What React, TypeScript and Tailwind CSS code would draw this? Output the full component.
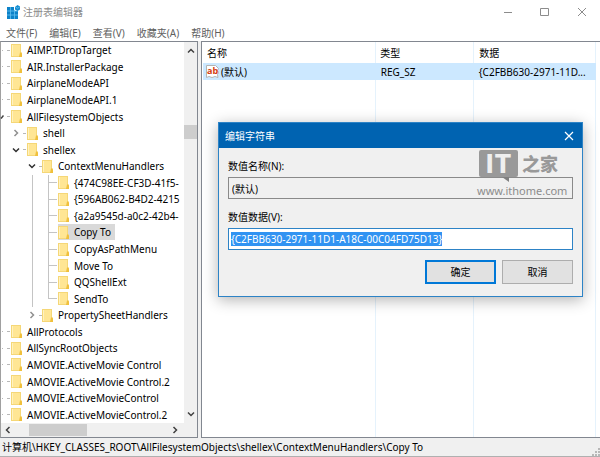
import { useEffect, useRef } from "react";
import clsx from "clsx";

type Guide = "stub" | "clip" | "closed" | "open" | "line" | "tee" | "end" | "none";

type TreeItem = {
  name: string;
  guides: Guide[];
  selected?: boolean;
};

const tree: TreeItem[] = [
  { name: "AIMP.TDropTarget", guides: ["stub"] },
  { name: "AIR.InstallerPackage", guides: ["stub"] },
  { name: "AirplaneModeAPI", guides: ["stub"] },
  { name: "AirplaneModeAPI.1", guides: ["stub"] },
  { name: "AllFilesystemObjects", guides: ["clip"] },
  { name: "shell", guides: ["none", "closed"] },
  { name: "shellex", guides: ["none", "open"] },
  { name: "ContextMenuHandlers", guides: ["none", "none", "open"] },
  { name: "{474C98EE-CF3D-41f5-", guides: ["none", "none", "line", "tee"] },
  { name: "{596AB062-B4D2-4215", guides: ["none", "none", "line", "tee"] },
  { name: "{a2a9545d-a0c2-42b4-", guides: ["none", "none", "line", "tee"] },
  { name: "Copy To", guides: ["none", "none", "line", "tee"], selected: true },
  { name: "CopyAsPathMenu", guides: ["none", "none", "line", "tee"] },
  { name: "Move To", guides: ["none", "none", "line", "tee"] },
  { name: "QQShellExt", guides: ["none", "none", "line", "tee"] },
  { name: "SendTo", guides: ["none", "none", "line", "end"] },
  { name: "PropertySheetHandlers", guides: ["none", "none", "closed"] },
  { name: "AllProtocols", guides: ["stub"] },
  { name: "AllSyncRootObjects", guides: ["stub"] },
  { name: "AMOVIE.ActiveMovie Control", guides: ["stub"] },
  { name: "AMOVIE.ActiveMovie Control.2", guides: ["stub"] },
  { name: "AMOVIE.ActiveMovieControl", guides: ["stub"] },
  { name: "AMOVIE.ActiveMovieControl.2", guides: ["stub"] },
];

const menus = ["文件(F)", "编辑(E)", "查看(V)", "收藏夹(A)", "帮助(H)"];

const guideWidths = ["w-[11px]", "w-4", "w-[15px]", "w-4"];

const chevrons = {
  up: "M2 6.500 5 3.500l3 3",
  down: "M2 3.500 5 6.500l3-3",
  left: "M6.500 2 3.500 5l3 3",
  right: "M3.500 2 6.500 5l-3 3",
};

function Chevron({ to, className }: { to: keyof typeof chevrons; className?: string }) {
  return (
    <svg viewBox="0 0 10 10" className={clsx("size-[10px] shrink-0", className)} fill="none" stroke="currentColor" strokeWidth="1.5">
      <path d={chevrons[to]} />
    </svg>
  );
}

function GuideCell({ kind, width }: { kind: Guide; width: string }) {
  return (
    <span className={clsx("flex shrink-0 items-center self-stretch", width)}>
      {kind === "stub" && (
        <>
          <span className="ml-0.5 w-px border-t border-[#b8b8b8]" />
          <span className="ml-1 w-[3px] border-t border-[#b8b8b8]" />
        </>
      )}
      {kind === "clip" && (
        <>
          <svg viewBox="0 0 4 6" className="h-[6px] w-1" fill="none" stroke="#404040" strokeWidth="1.4">
            <path d="M1 4.500 3.500 1.500" />
          </svg>
          <span className="ml-[3px] w-[3px] border-t border-[#b8b8b8]" />
        </>
      )}
      {(kind === "closed" || kind === "open") && (
        <>
          <Chevron to={kind === "open" ? "down" : "right"} className={kind === "open" ? "text-[#303030]" : "text-[#909090]"} />
          <span className="ml-0.5 w-[3px] border-t border-[#b8b8b8]" />
        </>
      )}
      {kind === "line" && <span className="w-[6px] self-stretch border-r border-[#c4c4c4]" />}
      {(kind === "tee" || kind === "end") && (
        <>
          <span
            className={clsx(
              "w-[7px] border-r border-[#c4c4c4]",
              kind === "tee" ? "self-stretch" : "h-1/2 self-start"
            )}
          />
          <span className="w-2 border-t border-[#c4c4c4]" />
        </>
      )}
    </span>
  );
}

function Folder() {
  return (
    <svg viewBox="0 0 11 13" className="h-[13px] w-[11px] shrink-0">
      <path d="M0 0h10v8l1 1v4H0z" fill="#f5d777" />
      <path d="M1 1h8v11H1z" fill="#ffe694" />
      <path d="M1 1h1v11H1z" fill="#fff2c0" />
      <path d="M9 8.500h1l1 1V13H8z" fill="#f0c03c" />
    </svg>
  );
}

function RegeditIcon() {
  return (
    <svg viewBox="0 0 14 14" className="size-[14px] shrink-0">
      <path d="M1 2h7v4h4v8H1z" fill="#0c82c8" />
      <path d="M1 6h11M1 10h11M4.500 2v12M8.500 5v9" stroke="#62c0f0" strokeWidth=".8" />
      <path d="m9 2 2.500-2L14 1.500v3L11.500 6 9 4.500z" fill="#148cd0" />
      <path d="m9.500 2.200 2 1 2-1" fill="none" stroke="#7ccdf5" strokeWidth=".7" />
    </svg>
  );
}

function StringIcon() {
  return (
    <svg viewBox="0 0 13 13" className="size-[13px] shrink-0">
      <path d="M.5.5h9l3 3-1 2 1 2-1 2 .5 3-3-1-3 1-3-1-2.500 1z" fill="#fff" stroke="#b4b4b4" />
      <text x="1" y="9" fontSize="9" fontWeight="700" fontFamily="Open Sans, sans-serif" fill="#d43c10">
        ab
      </text>
    </svg>
  );
}

function TitleBar() {
  return (
    <header className="flex h-6 shrink-0 items-center pl-1.5 text-[#8c8c8c]">
      <RegeditIcon />
      <h1 className="ml-[3px] flex-1">注册表编辑器</h1>
      <div className="flex">
        <button aria-label="最小化" className="flex h-6 w-[37px] items-center justify-center">
          <svg viewBox="0 0 10 10" className="size-[10px]" stroke="currentColor">
            <path d="M1 5.500h8" />
          </svg>
        </button>
        <button aria-label="最大化" className="flex h-6 w-[37px] items-center justify-center">
          <svg viewBox="0 0 10 10" className="size-[10px]" fill="none" stroke="currentColor">
            <path d="M.5 1.500h8v7h-8z" />
          </svg>
        </button>
        <button aria-label="关闭" className="flex h-6 w-[37px] items-center justify-center">
          <svg viewBox="0 0 10 10" className="size-[10px]" stroke="currentColor">
            <path d="m1 1 8 8M9 1 1 9" />
          </svg>
        </button>
      </div>
    </header>
  );
}

function TreePane() {
  return (
    <section className="flex w-[198px] shrink-0 flex-col border border-[#828790] border-l-[#a0a0a0] bg-white">
      <div className="flex min-h-0 flex-1">
        <ul className="-ml-px flex min-w-0 flex-1 flex-col overflow-hidden">
          {tree.map((item) => (
            <li key={item.name} className="flex min-h-0 flex-1 items-center whitespace-nowrap">
              {item.guides.map((kind, i) => (
                <GuideCell key={i} kind={kind} width={guideWidths[i]} />
              ))}
              <span className={clsx("flex h-4 items-center", item.selected && "bg-[#d9d9d9]")}>
                <Folder />
                <span className="pl-[5px] pr-1">{item.name}</span>
              </span>
            </li>
          ))}
        </ul>
        <div className="flex w-[13px] shrink-0 flex-col items-center bg-[#f0f0f0] py-1 text-[#404040]">
          <Chevron to="up" />
          <span className="mt-[69px] h-[14px] w-full bg-[#cdcdcd]" />
          <Chevron to="down" className="mt-auto" />
        </div>
      </div>
      <div className="flex h-[14px] shrink-0 items-center bg-[#f0f0f0] pl-0.5 pr-[17px] text-[#404040]">
        <Chevron to="left" />
        <span className="ml-4 h-3 w-[58px] bg-[#cdcdcd]" />
        <Chevron to="right" className="ml-auto" />
      </div>
    </section>
  );
}

function ValueList() {
  return (
    <section className="min-w-0 flex-1 border border-r-0 border-[#828790] bg-white pl-px pr-1">
      <table className="h-full w-full table-fixed border-collapse text-left">
        <thead>
          <tr className="h-[21px]">
            <th className="w-[44%] border-r border-[#e5f2fc] pl-1 font-normal">名称</th>
            <th className="w-1/4 border-r border-[#e5f2fc] pl-1 font-normal">类型</th>
            <th className="border-r border-[#e5f2fc] pl-[5px] font-normal">数据</th>
          </tr>
        </thead>
        <tbody>
          <tr className="h-[17px] bg-[#cce8ff]">
            <td className="pl-[3px]">
              <span className="flex items-center gap-0.5">
                <StringIcon />
                (默认)
              </span>
            </td>
            <td className="pl-[5px]">REG_SZ</td>
            <td className="whitespace-nowrap pl-[5px]">{"{C2FBB630-2971-11D..."}</td>
          </tr>
          <tr>
            <td className="border-r border-[#e5f2fc]" />
            <td className="border-r border-[#e5f2fc]" />
            <td className="border-r border-[#e5f2fc]" />
          </tr>
        </tbody>
      </table>
    </section>
  );
}

function Watermark() {
  return (
    <div className="pointer-events-none absolute left-[258px] top-[27px] flex flex-col text-[#8c8c8c]">
      <div className="flex items-center gap-1 pl-0.5">
        <span className="relative flex h-[27px] w-[39px] items-center justify-center gap-px rounded-xs bg-[#999] font-[Roboto,sans-serif] text-[26px] font-black leading-none text-[#efefef]">
          <span>I</span>
          <span>T</span>
          <svg viewBox="0 0 7 5" className="absolute left-[23px] top-[27px] h-[5px] w-[7px]">
            <path d="M0 0h7v5z" fill="#808080" />
          </svg>
        </span>
        <span className="text-lg font-black leading-none text-[#999]">之家</span>
      </div>
      <span className="mt-1.5 text-[11px] leading-4">www.ithome.com</span>
    </div>
  );
}

function EditStringDialog() {
  const dataRef = useRef<HTMLInputElement>(null);

  // the value starts out fully selected, ready to be overwritten
  useEffect(() => {
    dataRef.current?.focus();
    dataRef.current?.select();
  }, []);

  return (
    <div
      role="dialog"
      aria-labelledby="dialog-title"
      className="absolute left-[218px] top-[122px] w-[365px] border border-[#2d83c6] bg-[#f0f0f0] shadow-[0_3px_14px_rgba(0,0,0,0.3)]"
    >
      <div className="flex h-[25px] items-center bg-[#0063b1] pl-1.5 text-white">
        <h2 id="dialog-title" className="flex-1">
          编辑字符串
        </h2>
        <button aria-label="关闭" className="flex h-full w-[26px] items-center justify-center">
          <svg viewBox="0 0 10 10" className="size-[10px]" stroke="currentColor" strokeWidth="1.2">
            <path d="m1 1 8 8M9 1 1 9" />
          </svg>
        </button>
      </div>
      <form className="flex flex-col px-[9px] pb-3 pt-[11px]" onSubmit={(e) => e.preventDefault()}>
        <label htmlFor="value-name" className="leading-[14px]">
          数值名称(N):
        </label>
        <input
          id="value-name"
          readOnly
          defaultValue="(默认)"
          className="mt-1 h-[22px] border border-[#8a8a8a] bg-[#f0f0f0] px-[3px] outline-none"
        />
        <label htmlFor="value-data" className="mt-[11px] leading-[14px]">
          数值数据(V):
        </label>
        <input
          id="value-data"
          ref={dataRef}
          defaultValue="{C2FBB630-2971-11D1-A18C-00C04FD75D13}"
          className="mt-1 h-[22px] border border-[#2d83c6] bg-white px-0.5 outline-none selection:bg-[#3093f2fe] selection:text-white"
        />
        <div className="mt-2.5 flex justify-end gap-1.5">
          <button className="h-6 w-[71px] border-2 border-[#0078d7] bg-[#e1e1e1]">确定</button>
          <button type="button" className="h-6 w-[71px] border border-[#adadad] bg-[#e1e1e1]">
            取消
          </button>
        </div>
      </form>
      <Watermark />
    </div>
  );
}

export default function App() {
  return (
    <div className="relative flex h-screen flex-col overflow-hidden bg-white font-['Noto_Sans','Noto_Sans_CJK_SC',sans-serif] text-[10px] leading-[14px] text-black">
      <TitleBar />
      <nav className="flex h-[17px] shrink-0 items-center gap-3 pl-1.5 text-[#606060]">
        {menus.map((menu) => (
          <button key={menu}>{menu}</button>
        ))}
      </nav>
      <main className="flex min-h-0 flex-1 gap-[3px] bg-[#f0f0f0]">
        <TreePane />
        <ValueList />
      </main>
      <footer className="flex h-[19px] shrink-0 items-center border-b border-[#b0b0b0] bg-[#f0f0f0] pl-0.5">
        <p className="flex-1">计算机\HKEY_CLASSES_ROOT\AllFilesystemObjects\shellex\ContextMenuHandlers\Copy To</p>
        <svg viewBox="0 0 8 8" className="size-2 self-end" fill="#b8b8b8">
          <path d="M6 0h2v2H6zM3 3h2v2H3zM6 3h2v2H6zM0 6h2v2H0zM3 6h2v2H3zM6 6h2v2H6z" />
        </svg>
      </footer>
      <EditStringDialog />
    </div>
  );
}
